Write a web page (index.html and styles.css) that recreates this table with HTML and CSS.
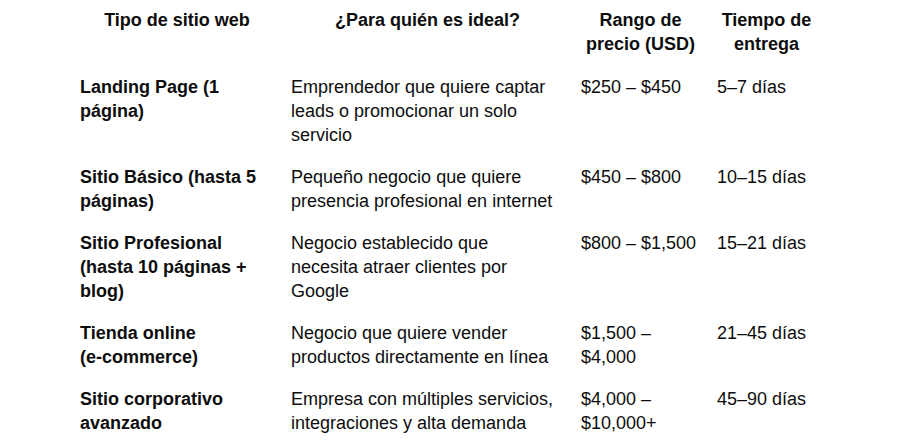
FILE: index.html
```html
<!DOCTYPE html>
<html lang="es">
<head>
<meta charset="utf-8">
<title>Tipos de sitio web</title>
<link rel="stylesheet" href="styles.css">
</head>
<body>
<table class="pricing">
  <colgroup>
    <col class="c1"><col class="c2"><col class="c3"><col class="c4">
  </colgroup>
  <thead>
    <tr>
      <th>Tipo de sitio web</th>
      <th>¿Para quién es ideal?</th>
      <th>Rango de precio (USD)</th>
      <th>Tiempo de entrega</th>
    </tr>
  </thead>
  <tbody>
    <tr>
      <td class="name">Landing Page (1 página)</td>
      <td class="who">Emprendedor que quiere captar leads o promocionar un solo servicio</td>
      <td>$250 – $450</td>
      <td>5–7 días</td>
    </tr>
    <tr>
      <td class="name">Sitio Básico (hasta 5 páginas)</td>
      <td class="who">Pequeño negocio que quiere presencia profesional en internet</td>
      <td>$450 – $800</td>
      <td>10–15 días</td>
    </tr>
    <tr>
      <td class="name">Sitio Profesional (hasta 10 páginas + blog)</td>
      <td class="who">Negocio establecido que necesita atraer clientes por Google</td>
      <td>$800 – $1,500</td>
      <td>15–21 días</td>
    </tr>
    <tr>
      <td class="name">Tienda online <span class="nowrap">(e-commerce)</span></td>
      <td class="who">Negocio que quiere vender productos directamente en línea</td>
      <td>$1,500 – $4,000</td>
      <td>21–45 días</td>
    </tr>
    <tr>
      <td class="name">Sitio corporativo avanzado</td>
      <td class="who">Empresa con múltiples servicios, integraciones y alta demanda</td>
      <td>$4,000 – $10,000+</td>
      <td>45–90 días</td>
    </tr>
  </tbody>
</table>
</body>
</html>
```

FILE: styles.css
```css
html, body {
  margin: 0;
  padding: 0;
  background: #ffffff;
}

body {
  font-family: "Liberation Sans", Arial, sans-serif;
  font-size: 18px;
  line-height: 24px;
  color: #0d0d0d;
}

.pricing {
  border-collapse: collapse;
  table-layout: fixed;
  width: 753px;
  margin-left: 72px;
}

.c1 { width: 211px; }
.c2 { width: 290px; }
.c3 { width: 136px; }
.c4 { width: 116px; }

.pricing th,
.pricing td {
  padding: 9px 9px 9px 8px;
  vertical-align: top;
  text-align: left;
}

.pricing th {
  padding-top: 8px;
  padding-bottom: 10px;
  font-weight: 700;
  text-align: center;
}

.pricing td.name {
  font-weight: 700;
}

.pricing td.who {
  padding-right: 15px;
}

.nowrap {
  white-space: nowrap;
}
```
